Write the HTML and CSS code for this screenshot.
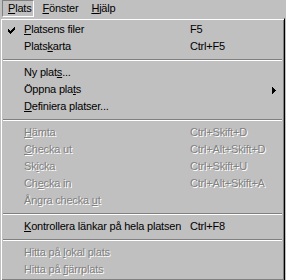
FILE: index.html
```html
<!DOCTYPE html>
<html lang="sv">
<head>
  <meta charset="UTF-8">
  <title>Plats-menyn</title>
  <link rel="stylesheet" href="styles.css">
</head>
<body>

  <div class="menubar">
    <span class="bar-item pressed"><u>P</u>lats</span>
    <span class="bar-item"><u>F</u>önster</span>
    <span class="bar-item"><u>H</u>jälp</span>
  </div>

  <div class="menu">
    <div class="item">
      <span class="check">
        <svg width="7" height="7" viewBox="0 0 7 7" shape-rendering="crispEdges"><path d="M6 0h1v1h-1z M5 1h2v1h-2z M0 2h1v1h-1z M4 2h3v1h-3z M0 3h2v1h-2z M3 3h3v1h-3z M0 4h5v1h-5z M1 5h3v1h-3z M2 6h1v1h-1z" fill="#000"/></svg>
      </span>
      <span class="label"><u>P</u>latsens filer</span>
      <span class="key">F5</span>
    </div>
    <div class="item">
      <span class="check"></span>
      <span class="label">Plats<u>k</u>arta</span>
      <span class="key">Ctrl+F5</span>
    </div>

    <div class="sep"></div>

    <div class="item">
      <span class="check"></span>
      <span class="label">Ny plat<u>s</u>...</span>
      <span class="key"></span>
    </div>
    <div class="item">
      <span class="check"></span>
      <span class="label">Öppna pla<u>t</u>s</span>
      <span class="key"></span>
      <span class="arrow">
        <svg width="4" height="7" viewBox="0 0 4 7" shape-rendering="crispEdges"><path d="M0 0h1v7h-1z M1 1h1v5h-1z M2 2h1v3h-1z M3 3h1v1h-1z" fill="#000"/></svg>
      </span>
    </div>
    <div class="item">
      <span class="check"></span>
      <span class="label"><u>D</u>efiniera platser...</span>
      <span class="key"></span>
    </div>

    <div class="sep"></div>

    <div class="item disabled">
      <span class="check"></span>
      <span class="label"><u>H</u>ämta</span>
      <span class="key">Ctrl+Skift+D</span>
    </div>
    <div class="item disabled">
      <span class="check"></span>
      <span class="label"><u>C</u>hecka ut</span>
      <span class="key">Ctrl+Alt+Skift+D</span>
    </div>
    <div class="item disabled">
      <span class="check"></span>
      <span class="label">Sk<u>i</u>cka</span>
      <span class="key">Ctrl+Skift+U</span>
    </div>
    <div class="item disabled">
      <span class="check"></span>
      <span class="label">Ch<u>e</u>cka in</span>
      <span class="key">Ctrl+Alt+Skift+A</span>
    </div>
    <div class="item disabled">
      <span class="check"></span>
      <span class="label">Ångra checka <u>u</u>t</span>
      <span class="key"></span>
    </div>

    <div class="sep"></div>

    <div class="item">
      <span class="check"></span>
      <span class="label"><u>K</u>ontrollera länkar på hela platsen</span>
      <span class="key">Ctrl+F8</span>
    </div>

    <div class="sep"></div>

    <div class="item disabled">
      <span class="check"></span>
      <span class="label">Hitta på <u>l</u>okal plats</span>
      <span class="key"></span>
    </div>
    <div class="item disabled">
      <span class="check"></span>
      <span class="label">Hitta på <u>f</u>järrplats</span>
      <span class="key"></span>
    </div>
  </div>

</body>
</html>
```

FILE: styles.css
```css
body {
  margin: 0;
  width: 286px;
  height: 280px;
  overflow: hidden;
  background-color: #c0c0c0;
  color: #000;
  font-family: "Liberation Sans", Arial, sans-serif;
  font-size: 11px;
  letter-spacing: -0.2px;
}

u {
  text-decoration: underline;
  text-underline-offset: 1px;
}

/* menu bar */
.menubar {
  display: flex;
  height: 18px;
  padding-left: 2px;
}

.bar-item {
  height: 15px;
  line-height: 15px;
  padding: 0 4px 0 7px;
  border: 1px solid transparent;
}

.bar-item.pressed {
  padding: 0 2px 0 5px;
  border-color: #808080 #fff #fff #808080;
}

/* dropdown */
.menu {
  width: 279px;
  padding: 2px;
  border: 1px solid;
  border-color: #c0c0c0 #000 #000 #c0c0c0;
  box-shadow: inset 1px 1px 0 #fff, inset -1px -1px 0 #808080;
}

.item {
  display: grid;
  grid-template-columns: 21px 166px 82px 10px;
  align-items: center;
  height: 17px;
  line-height: 17px;
  white-space: nowrap;
}

.check {
  align-self: start;
  height: 17px;
  padding: 6px 0 0 5px;
  box-sizing: border-box;
}

.check svg,
.arrow svg {
  display: block;
}

.arrow {
  padding-top: 1px;
}

.disabled {
  color: #808080;
  text-shadow: 1px 1px 0 #fff;
}

.sep {
  height: 1px;
  margin: 4px 0 3px;
  background-color: #808080;
  border-bottom: 1px solid #fff;
}
```
